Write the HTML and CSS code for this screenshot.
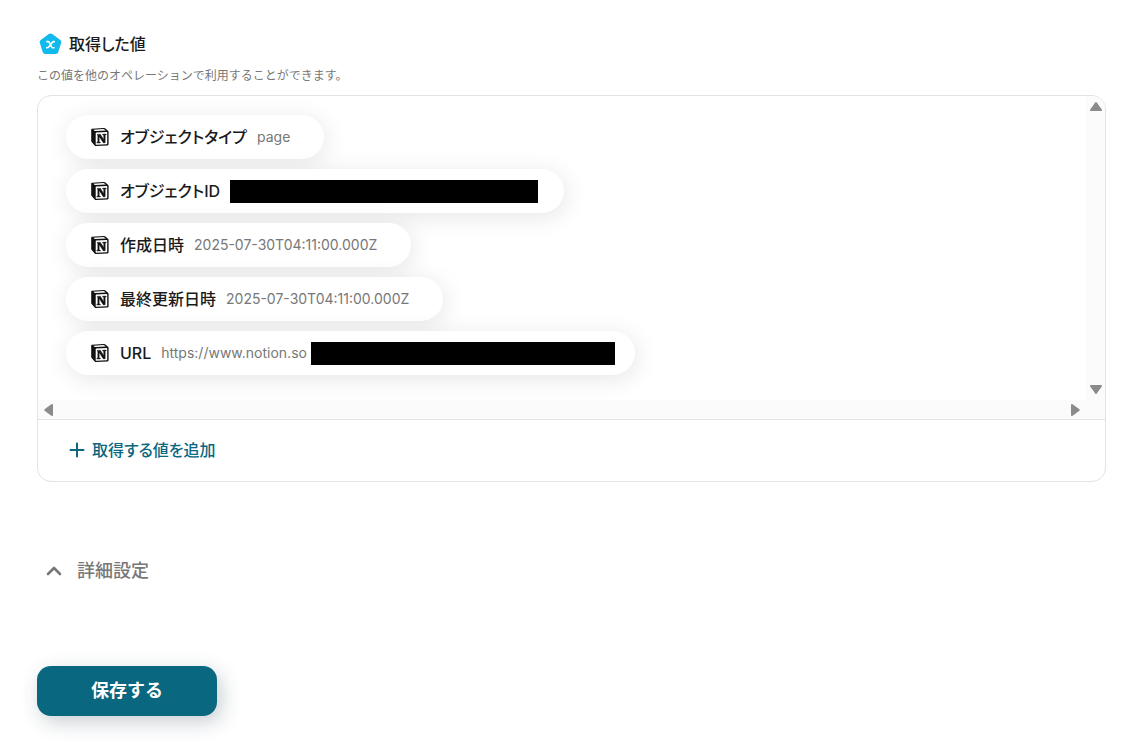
FILE: index.html
```html
<!DOCTYPE html>
<html lang="ja">
<head>
<meta charset="utf-8">
<meta name="viewport" content="width=device-width, initial-scale=1">
<title>取得した値</title>
<link rel="stylesheet" href="styles.css">
</head>
<body>
<svg class="defs" aria-hidden="true">
  <symbol id="notion" viewBox="0 0 20 20">
    <path d="M2 1.7 13.5.9Q14.4.8 15.1 1.3L18 3.7Q18.6 4.1 18.6 4.8V17.3Q18.6 18.4 17.5 18.5L6 19.1Q5.2 19.1 4.7 18.5L1.6 14.9Q1.2 14.4 1.2 13.7V2.6Q1.2 1.8 2 1.7Z" fill="#111"/>
    <path d="M3.4 2.7 13.3 2.1Q14 2.1 14.5 2.5L15.8 3.5 5.6 4.1Q5 4.1 4.5 3.7Z" fill="#fff"/>
    <path d="M6.2 5.6 16.7 5Q17.2 5 17.2 5.5V16.6Q17.2 17.1 16.7 17.2L6.3 17.7Q5.7 17.7 5.7 17.2V6.1Q5.7 5.6 6.2 5.6Z" fill="#fff"/>
    <path d="M7.2 7.4 10.3 7.2 13.7 12.4V8.3L12.6 8V7.2L16.2 7V7.7L15.2 8.1V15.7L13.4 15.9 9.2 9.6V14.9L10.4 15.2V15.9L6.8 16.1V15.4L7.8 15V8.4L7.2 8.1Z" fill="#111" stroke="#111" stroke-width=".4"/>
  </symbol>
</svg>
<main class="page">
  <section class="values">
    <h2 class="title">
      <svg class="title-icon" viewBox="0 0 22 22" aria-hidden="true">
        <path d="M9.3 1.1Q11-.1 12.7 1.1L20.8 6.9Q22.3 8 21.7 9.8L18.7 19.2Q18.1 21 16.2 21H5.8Q3.9 21 3.3 19.2L.3 9.8Q-.3 8 1.2 6.9Z" fill="#12b9ed"/>
        <path d="M7.4 8.6H8.6Q9.5 8.6 9.9 9.5L12 13.9Q12.4 14.8 13.3 14.8H14.5M14.8 8.6Q13.4 8.5 12.5 9.7L9.4 13.7Q8.6 14.9 7.1 14.8" fill="none" stroke="#fff" stroke-width="1.6" stroke-linecap="round" stroke-linejoin="round"/>
      </svg>
      取得した値
    </h2>
    <p class="note">この値を他のオペレーションで利用することができます。</p>
    <div class="panel">
      <div class="scroller">
        <ul class="list">
          <li class="chip"><svg class="chip-icon" aria-hidden="true"><use href="#notion"/></svg><span class="name">オブジェクトタイプ</span><span class="value">page</span></li>
          <li class="chip chip-id"><svg class="chip-icon" aria-hidden="true"><use href="#notion"/></svg><span class="name">オブジェクトID</span><span class="mask mask-id"></span></li>
          <li class="chip"><svg class="chip-icon" aria-hidden="true"><use href="#notion"/></svg><span class="name">作成日時</span><span class="value">2025-07-30T04:11:00.000Z</span></li>
          <li class="chip"><svg class="chip-icon" aria-hidden="true"><use href="#notion"/></svg><span class="name">最終更新日時</span><span class="value">2025-07-30T04:11:00.000Z</span></li>
          <li class="chip chip-url"><svg class="chip-icon" aria-hidden="true"><use href="#notion"/></svg><span class="name">URL</span><span class="value">https://www.notion.so</span><span class="mask mask-url"></span></li>
        </ul>
        <div class="bar bar-y">
          <button class="arrow" type="button" aria-label="上へ"><svg class="arrow-icon" viewBox="0 0 14 14"><path d="M6.2 2.6Q7 1.6 7.8 2.6L12.8 9.4Q13.6 11 12 11H2Q.4 11 1.2 9.4Z"/></svg></button>
          <button class="arrow" type="button" aria-label="下へ"><svg class="arrow-icon" viewBox="0 0 14 14"><path d="M6.2 11.4Q7 12.4 7.8 11.4L12.8 4.6Q13.6 3 12 3H2Q.4 3 1.2 4.6Z"/></svg></button>
        </div>
        <div class="bar bar-x">
          <button class="arrow" type="button" aria-label="左へ"><svg class="arrow-icon" viewBox="0 0 14 14"><path d="M2.6 6.2Q1.6 7 2.6 7.8L9.4 12.8Q11 13.6 11 12V2Q11 .4 9.4 1.2Z"/></svg></button>
          <button class="arrow" type="button" aria-label="右へ"><svg class="arrow-icon" viewBox="0 0 14 14"><path d="M11.4 6.2Q12.4 7 11.4 7.8L4.6 12.8Q3 13.6 3 12V2Q3 .4 4.6 1.2Z"/></svg></button>
        </div>
        <div class="corner"></div>
      </div>
      <div class="footer">
        <button class="add" type="button">
          <svg class="add-icon" viewBox="0 0 16 16" aria-hidden="true"><path d="M8 1.5V14.5M1.5 8H14.5" stroke="currentColor" stroke-width="2" stroke-linecap="round"/></svg>
          取得する値を追加
        </button>
      </div>
    </div>
  </section>
  <button class="details" type="button">
    <svg class="details-icon" viewBox="0 0 16 16" aria-hidden="true"><path d="M2 11 8 5 14 11" fill="none" stroke="currentColor" stroke-width="2.6" stroke-linecap="round" stroke-linejoin="round"/></svg>
    詳細設定
  </button>
  <button class="save" type="button">保存する</button>
</main>
</body>
</html>
```

FILE: styles.css
```css
* {
  box-sizing: border-box;
}

body {
  margin: 0;
  background: #fff;
  color: #1a1a1a;
  font-family: Inter, "Noto Sans CJK JP", sans-serif;
}

button {
  padding: 0;
  border: 0;
  background: none;
  font: inherit;
  cursor: pointer;
}

.defs {
  display: none;
}

.page {
  display: flex;
  flex-direction: column;
  align-items: flex-start;
  padding: 32px 33px 32px 37px;
}

.values {
  align-self: stretch;
}

.title {
  display: flex;
  align-items: center;
  gap: 7px;
  margin: 0;
  padding-left: 2px;
  font-size: 16px;
  font-weight: 500;
  font-feature-settings: "palt";
  line-height: 24px;
}

.title-icon {
  width: 23px;
  height: 22px;
}

.note {
  margin: 9px 0;
  color: #777;
  font-size: 12px;
  line-height: 21px;
}

.panel {
  border: 1px solid #e3e3e3;
  border-radius: 14px;
  overflow: hidden;
}

.scroller {
  display: grid;
  grid-template-columns: 1fr 19px;
  grid-template-rows: auto 19px;
}

.list {
  display: flex;
  flex-direction: column;
  align-items: flex-start;
  gap: 10px;
  margin: 0;
  padding: 19px 28px 25px;
  list-style: none;
  overflow: hidden;
}

.chip {
  display: flex;
  align-items: center;
  height: 44px;
  padding: 0 34px 0 24px;
  border-radius: 22px;
  background: #fff;
  box-shadow: 2px 4px 24px rgba(0, 0, 0, 0.1);
}

.chip-id {
  padding-right: 26px;
}

.chip-url {
  padding-right: 20px;
}

.chip-icon {
  width: 20px;
  height: 20px;
  margin-right: 10px;
}

.name {
  font-size: 16px;
  font-weight: 500;
  font-feature-settings: "palt";
  line-height: 24px;
}

.value {
  margin-left: 10px;
  color: #777;
  font-size: 14px;
  line-height: 24px;
}

.mask {
  height: 23px;
  background: #000;
}

.mask-id {
  width: 308px;
  margin-left: 10px;
}

.mask-url {
  width: 304px;
  margin-left: 4px;
}

.bar {
  display: flex;
  align-items: center;
  justify-content: space-between;
  background: #fbfbfb;
}

.bar-y {
  flex-direction: column;
  padding: 4px 0;
}

.bar-x {
  padding: 0 4px;
}

.corner {
  background: #fbfbfb;
}

.arrow {
  width: 14px;
  height: 14px;
}

.arrow-icon {
  display: block;
  width: 14px;
  height: 14px;
  fill: #8b8b8b;
}

.footer {
  padding: 18px 31px 19px;
  border-top: 1px solid #e3e3e3;
}

.add {
  display: flex;
  align-items: center;
  gap: 7px;
  color: #0a6780;
  font-size: 16px;
  font-weight: 500;
  font-feature-settings: "palt";
  line-height: 24px;
}

.add-icon {
  width: 16px;
  height: 16px;
}

.details {
  display: flex;
  align-items: center;
  gap: 15px;
  margin: 75px 0 0 9px;
  color: #777;
  font-size: 18px;
  font-weight: 500;
  line-height: 28px;
}

.details-icon {
  width: 16px;
  height: 16px;
}

.save {
  min-width: 180px;
  height: 50px;
  margin-top: 81px;
  padding-bottom: 4px;
  border-radius: 14px;
  background: #0a6780;
  box-shadow: 4px 6px 20px rgba(20, 50, 70, 0.24);
  color: #fff;
  font-size: 18px;
  font-weight: 700;
}
```
